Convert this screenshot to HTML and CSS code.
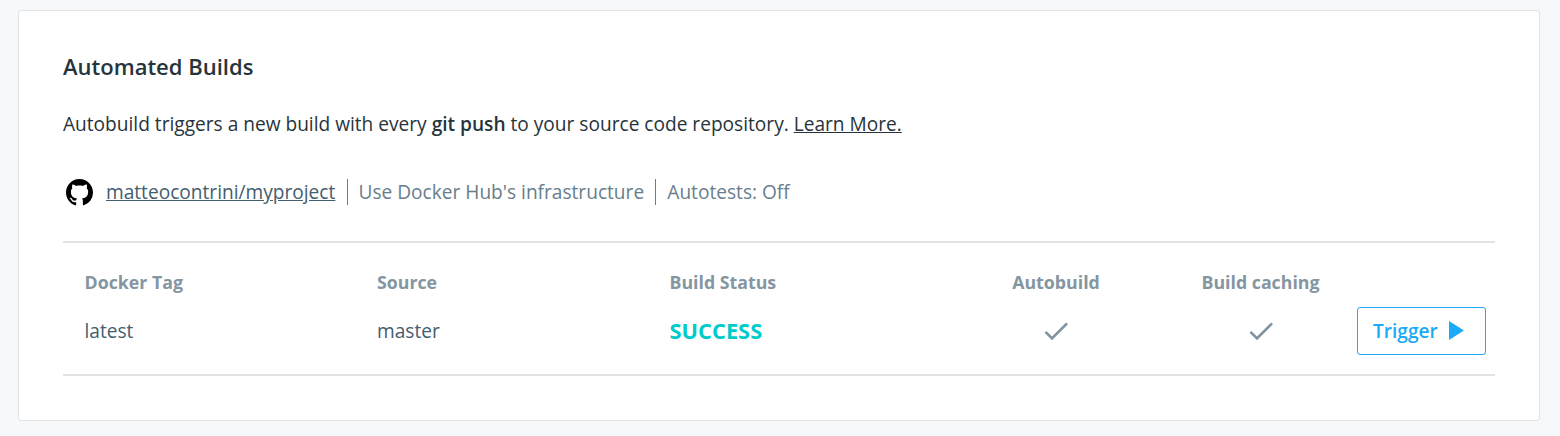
FILE: index.html
```html
<!DOCTYPE html>
<html lang="en">
<head>
<meta charset="utf-8">
<title>Automated Builds</title>
<link rel="stylesheet" href="styles.css">
</head>
<body>
<section class="card">
  <h2 class="title">Automated Builds</h2>
  <p class="intro">Autobuild triggers a new build with every <strong>git push</strong> to your source code repository. <a href="#">Learn More.</a></p>
  <div class="meta">
    <svg class="github" viewBox="0 0 16 16"><path d="M8 0C3.58 0 0 3.58 0 8c0 3.54 2.29 6.53 5.47 7.59.4.07.55-.17.55-.38 0-.19-.01-.82-.01-1.49-2.01.37-2.53-.49-2.69-.94-.09-.23-.48-.94-.82-1.13-.28-.15-.68-.52-.01-.53.63-.01 1.08.58 1.23.82.72 1.21 1.87.87 2.33.66.07-.52.28-.87.51-1.07-1.78-.2-3.64-.89-3.64-3.95 0-.87.31-1.59.82-2.15-.08-.2-.36-1.02.08-2.12 0 0 .67-.21 2.2.82.64-.18 1.32-.27 2-.27s1.36.09 2 .27c1.53-1.04 2.2-.82 2.2-.82.44 1.1.16 1.92.08 2.12.51.56.82 1.27.82 2.15 0 3.07-1.87 3.75-3.65 3.95.29.25.54.73.54 1.48 0 1.07-.01 1.93-.01 2.2 0 .21.15.46.55.38A8.01 8.01 0 0 0 16 8c0-4.42-3.58-8-8-8z"/></svg>
    <a class="repo" href="#">matteocontrini/myproject</a>
    <span class="item">Use Docker Hub's infrastructure</span>
    <span class="item">Autotests: Off</span>
  </div>
  <div class="builds">
    <div class="row head">
      <span>Docker Tag</span><span>Source</span><span>Build Status</span><span class="center">Autobuild</span><span class="center">Build caching</span><span></span>
    </div>
    <div class="row">
      <span>latest</span><span>master</span><span class="status">SUCCESS</span>
      <svg class="check" viewBox="0 0 24 24"><path d="M9 16.2 4.8 12l-1.4 1.4L9 19 21 7l-1.4-1.4z"/></svg>
      <svg class="check" viewBox="0 0 24 24"><path d="M9 16.2 4.8 12l-1.4 1.4L9 19 21 7l-1.4-1.4z"/></svg>
      <button class="trigger">Trigger<svg class="play" viewBox="0 0 15 19"><path d="M0 0v19l15-9.5z"/></svg></button>
    </div>
  </div>
</section>
</body>
</html>
```
FILE: styles.css
```css
* { box-sizing: border-box; }
body {
  margin: 0;
  padding: 10px 20px 15px 18px;
  height: 436px;
  background: #f7f8fa;
  color: #27343b;
  font: 19.11px/26px "Open Sans", sans-serif;
}
.card {
  height: 411px;
  padding: 41px 44px 0;
  background: #fff;
  border: 1px solid #e0e4e7;
  border-radius: 3px;
}
.title { margin: 0; font-size: 22px; font-weight: 600; line-height: 28px; }
.intro { margin: 31px 0 0; white-space: nowrap; }
.intro strong { font-weight: 600; }
.intro a { color: inherit; }
.meta { display: flex; align-items: center; height: 26px; margin-top: 42px; color: #677e8c; white-space: nowrap; }
.github { width: 27px; height: 27px; margin: 0 13px 0 3px; }
.repo { color: #445d6e; }
.item { margin-left: 11.2px; padding-left: 11px; border-left: 1px solid #677e8c; }
.builds { margin-top: 36px; padding-top: 26px; height: 135px; border-top: 2px solid #dfe3e6; border-bottom: 2px solid #dfe3e6; }
.row { display: grid; grid-template-columns: 292.5px 292.5px 278.5px 216px 193px 129px; height: 48px; padding-left: 21.5px; align-items: center; color: #445d6e; white-space: nowrap; }
.head { height: 26px; margin-bottom: 12px; color: #8496a1; font-size: 17.75px; font-weight: 700; }
.center { text-align: center; }
.status { color: #00cbca; font-size: 21.85px; font-weight: 700; }
.check { width: 32px; height: 32px; justify-self: center; margin-bottom: 1px; fill: #8094a0; }
.trigger { display: flex; align-items: center; height: 48px; padding: 0 15px; background: #fff; border: 1px solid #1aaaf8; border-radius: 3px; color: #1aaaf8; font: 600 19.11px/26px "Open Sans", sans-serif; }
.play { width: 15px; height: 19px; margin: 0 0 2px 11px; fill: currentColor; }
```
